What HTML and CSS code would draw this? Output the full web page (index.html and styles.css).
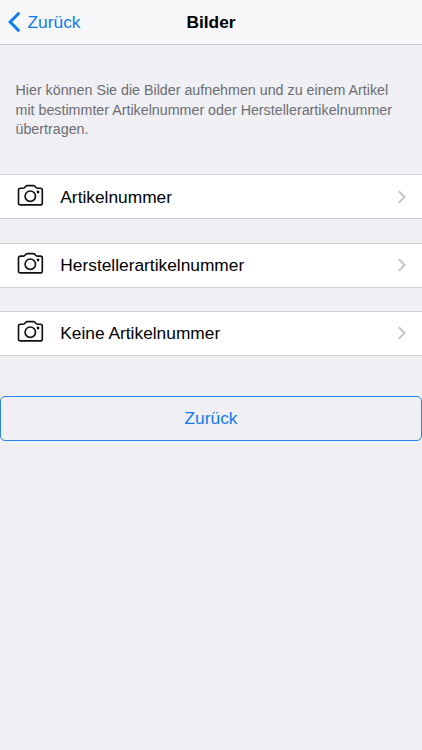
FILE: index.html
```html
<!DOCTYPE html>
<html lang="de">
<head>
<meta charset="utf-8">
<title>Bilder</title>
<link rel="stylesheet" href="styles.css">
</head>
<body>
<svg class="symbols" aria-hidden="true">
  <symbol id="camera" viewBox="0 0 27 23">
    <path d="M3.5 4.2H6.2Q7.6 4.2 8.3 2.9Q9 1.6 10.3 1.6H16.4Q17.7 1.6 18.4 2.9Q19.1 4.2 20.5 4.2H23.3Q25.3 4.2 25.3 6.2V18.9Q25.3 20.9 23.3 20.9H3.5Q1.5 20.9 1.5 18.9V6.2Q1.5 4.2 3.5 4.2Z"/>
    <circle cx="13.3" cy="12.2" r="5.2"/>
    <circle class="dot" cx="21" cy="8" r="1.4"/>
  </symbol>
  <symbol id="chevron" viewBox="0 0 10 14">
    <path d="M1.8 1.3L7.5 7L1.8 12.7"/>
  </symbol>
</svg>
<header class="navbar">
  <a class="back"><svg class="back-icon" viewBox="0 0 13 22"><path d="M11.3 1.8L2.2 11L11.3 20.2"/></svg><span>Zurück</span></a>
  <h1 class="title">Bilder</h1>
</header>
<main>
  <p class="intro">Hier können Sie die Bilder aufnehmen und zu einem Artikel mit bestimmter Artikelnummer oder Herstellerartikelnummer übertragen.</p>
  <nav class="list">
    <a class="row"><svg class="camera"><use href="#camera"/></svg><span class="label">Artikelnummer</span><svg class="chevron"><use href="#chevron"/></svg></a>
    <a class="row"><svg class="camera"><use href="#camera"/></svg><span class="label">Herstellerartikelnummer</span><svg class="chevron"><use href="#chevron"/></svg></a>
    <a class="row"><svg class="camera"><use href="#camera"/></svg><span class="label">Keine Artikelnummer</span><svg class="chevron"><use href="#chevron"/></svg></a>
  </nav>
  <button class="button" type="button">Zurück</button>
</main>
</body>
</html>
```
FILE: styles.css
```css
* { box-sizing: border-box; }
body {
  margin: 0;
  min-height: 750px;
  background: #efeff4;
  color: #000;
  font: 17.33px/20px "Liberation Sans", Arial, sans-serif;
}
.symbols { display: none; }
.navbar {
  display: grid;
  grid-template-columns: 1fr auto 1fr;
  align-items: center;
  height: 45px;
  background: #f7f7f9;
  border-bottom: 1px solid #c6c6ca;
}
.back {
  display: flex;
  align-items: center;
  gap: 6.5px;
  padding-left: 8px;
  color: #0f7bf0;
}
.back-icon {
  width: 13px;
  height: 22px;
  fill: none;
  stroke: #0f7bf0;
  stroke-width: 3;
}
.title {
  margin: 0;
  font-size: 17.33px;
  font-weight: 700;
}
.intro {
  margin: 36px 15px 34px 15.5px;
  color: #6d6d72;
  font-size: 14.27px;
  line-height: 19.6px;
}
.list {
  display: grid;
  gap: 23px;
}
.row {
  display: flex;
  align-items: center;
  height: 45px;
  padding: 0 15px 0 17px;
  background: #fff;
  border: solid #cfcfd4;
  border-width: 1px 0;
}
.row:first-child {
  margin-bottom: 1px;
  padding-top: 1.5px;
}
.camera {
  width: 27px;
  height: 23px;
  margin-bottom: 4px;
  fill: none;
  stroke: #111;
  stroke-width: 1.65;
}
.dot {
  fill: #111;
  stroke: none;
}
.label {
  flex: 1;
  margin-left: 16.3px;
}
.chevron {
  width: 10px;
  height: 14px;
  fill: none;
  stroke: #c7c7cc;
  stroke-width: 2.1;
}
.button {
  display: block;
  width: 100%;
  height: 45px;
  margin-top: 40px;
  padding: 0;
  border: 1.3px solid #2685ee;
  border-radius: 5px;
  background: transparent;
  color: #0f7bf0;
  font: inherit;
}
```
